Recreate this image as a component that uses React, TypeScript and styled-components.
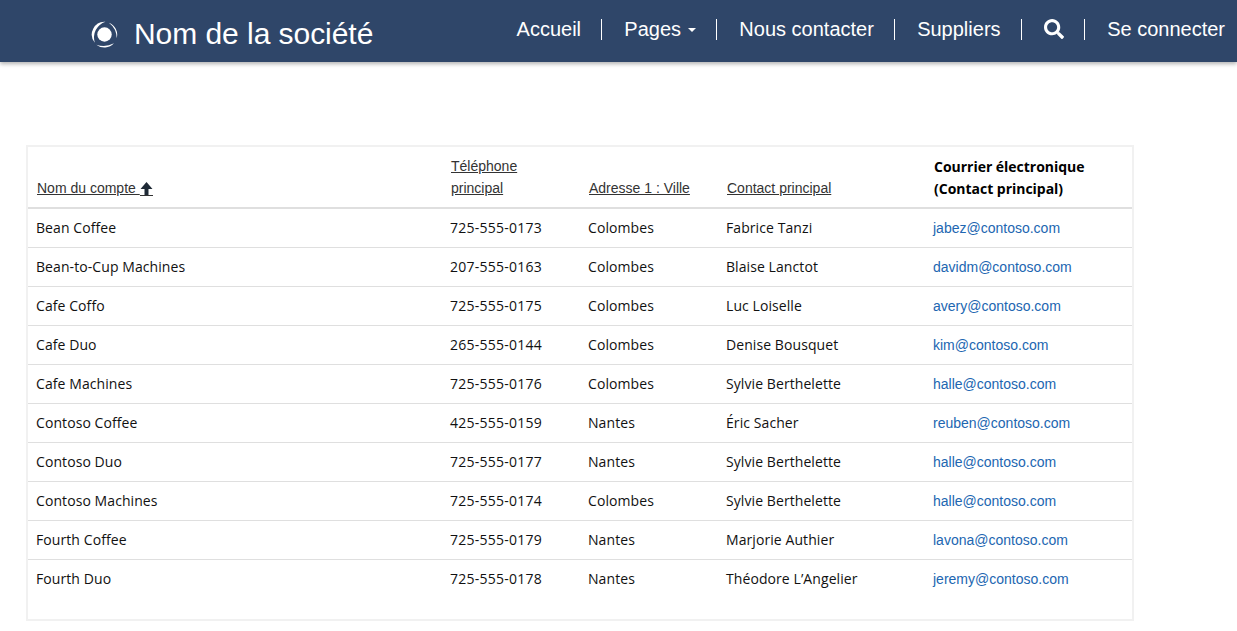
import React from 'react';
import styled, { createGlobalStyle } from 'styled-components';
import { FaSearch } from 'react-icons/fa';

const GlobalStyle = createGlobalStyle`
  html, body {
    margin: 0;
    padding: 0;
    background: #fff;
    font-family: "Open Sans", "Noto Sans", sans-serif;
    color: #000;
  }
`;

const NavBar = styled.header`
  height: 62px;
  background: #2f4669;
  box-shadow: 0 2px 4px rgba(0, 0, 0, 0.3);
  display: flex;
  align-items: flex-start;
  justify-content: space-between;
  font-family: "Liberation Sans", Arial, sans-serif;
  color: #fff;
`;

const Brand = styled.a`
  display: flex;
  align-items: center;
  gap: 16px;
  height: 68px;
  padding-left: 91px;
  font-size: 30px;
  letter-spacing: -0.05px;
  color: #fff;
`;

const NavList = styled.nav`
  display: flex;
  align-items: center;
  height: 20px;
  margin-top: 19px;
  padding-right: 12px;
`;

const NavItem = styled.a`
  display: flex;
  align-items: center;
  height: 21px;
  padding: 0 20px 0 22.3px;
  font-size: 20px;
  color: #fff;
  border-left: 1px solid #fff;
  &:first-child {
    border-left: none;
  }
  &:last-child {
    padding-right: 0;
  }
`;

const Caret = styled.span`
  width: 0;
  height: 0;
  margin-left: 7px;
  margin-top: 2px;
  border-left: 4.5px solid transparent;
  border-right: 4.5px solid transparent;
  border-top: 4px solid #fff;
`;

const Main = styled.main`
  padding: 83px 0 0 26px;
`;

const Card = styled.div`
  width: 1104px;
  height: 472px;
  border: 2px solid #f1f1f1;
`;

const Table = styled.table`
  width: 1104px;
  table-layout: fixed;
  border-collapse: collapse;
`;

const HeadCell = styled.th<{ $width: number }>`
  width: ${props => props.$width}px;
  height: 60px;
  box-sizing: border-box;
  padding: 8px;
  text-align: left;
  vertical-align: bottom;
  font-size: 14px;
  line-height: 22px;
  font-weight: 700;
  border-bottom: 2px solid #dfdfdf;
`;

const HeadTitle = styled.span`
  position: relative;
  top: 1px;
  margin-left: 1px;
  display: block;
  letter-spacing: -0.02px;
`;

const HeadLink = styled.a`
  display: inline-block;
  margin-left: 1px;
  font-family: "Liberation Sans", Arial, sans-serif;
  font-weight: 400;
  font-size: 14px;
  color: #333;
  text-decoration: underline;
`;

const SortIcon = styled.svg`
  width: 13px;
  height: 14px;
  vertical-align: -3px;
`;

const Row = styled.tr`
  height: 39px;
  border-bottom: 1px solid #dfdfdf;
  &:last-child {
    border-bottom: none;
  }
`;

const Cell = styled.td<{ $spacing?: number }>`
  box-sizing: border-box;
  padding: 0 8px 1px;
  font-size: 14px;
  letter-spacing: ${props => props.$spacing ?? 0.08}px;
  white-space: nowrap;
  color: #111;
`;

const EmailLink = styled.a`
  font-family: "Liberation Sans", Arial, sans-serif;
  font-size: 14px;
  letter-spacing: 0;
  color: #2166b1;
`;

const accounts = [
  ['Bean Coffee', '725-555-0173', 'Colombes', 'Fabrice Tanzi', 'jabez@contoso.com'],
  ['Bean-to-Cup Machines', '207-555-0163', 'Colombes', 'Blaise Lanctot', 'davidm@contoso.com'],
  ['Cafe Coffo', '725-555-0175', 'Colombes', 'Luc Loiselle', 'avery@contoso.com'],
  ['Cafe Duo', '265-555-0144', 'Colombes', 'Denise Bousquet', 'kim@contoso.com'],
  ['Cafe Machines', '725-555-0176', 'Colombes', 'Sylvie Berthelette', 'halle@contoso.com'],
  ['Contoso Coffee', '425-555-0159', 'Nantes', 'Éric Sacher', 'reuben@contoso.com'],
  ['Contoso Duo', '725-555-0177', 'Nantes', 'Sylvie Berthelette', 'halle@contoso.com'],
  ['Contoso Machines', '725-555-0174', 'Colombes', 'Sylvie Berthelette', 'halle@contoso.com'],
  ['Fourth Coffee', '725-555-0179', 'Nantes', 'Marjorie Authier', 'lavona@contoso.com'],
  ['Fourth Duo', '725-555-0178', 'Nantes', 'Théodore L’Angelier', 'jeremy@contoso.com'],
];

const Logo = () => (
  <svg width="27" height="27" viewBox="0 0 28 28" fill="#fff">
    <circle cx="14" cy="14" r="7.500" />
    <path d="M15 .8A13.200 13.200 0 0 0 4 22.500A17 17 0 0 1 15 .8z" />
    <path d="M18.500 1.800A13.200 13.200 0 0 1 26.600 18A20 20 0 0 0 18.500 1.800z" />
    <path d="M5.500 24.500A13.400 13.400 0 0 0 23.800 23.200A24 24 0 0 1 5.500 24.500z" />
  </svg>
);

export default function App() {
  return (
    <>
      <GlobalStyle />
      <NavBar>
        <Brand>
          <Logo />
          Nom de la société
        </Brand>
        <NavList>
          <NavItem>Accueil</NavItem>
          <NavItem>
            Pages
            <Caret />
          </NavItem>
          <NavItem>Nous contacter</NavItem>
          <NavItem>Suppliers</NavItem>
          <NavItem>
            <FaSearch size={20} />
          </NavItem>
          <NavItem>Se connecter</NavItem>
        </NavList>
      </NavBar>
      <Main>
        <Card>
          <Table>
            <thead>
              <tr>
                <HeadCell $width={414}>
                  <HeadLink>
                    {'Nom du compte\u00a0'}
                    <SortIcon viewBox="0 0 13 14">
                      <path d="M6.500 0L12.500 7H8.500v6h-4V7H.500z" fill="#1f2a36" />
                      <rect y="13" width="13" height="1" fill="#333" />
                    </SortIcon>
                  </HeadLink>
                </HeadCell>
                <HeadCell $width={138}>
                  <HeadLink>Téléphone principal</HeadLink>
                </HeadCell>
                <HeadCell $width={138}>
                  <HeadLink>Adresse 1 : Ville</HeadLink>
                </HeadCell>
                <HeadCell $width={207}>
                  <HeadLink>Contact principal</HeadLink>
                </HeadCell>
                <HeadCell $width={207}>
                  <HeadTitle>Courrier électronique (Contact principal)</HeadTitle>
                </HeadCell>
              </tr>
            </thead>
            <tbody>
              {accounts.map(account => (
                <Row key={account[0]}>
                  <Cell>{account[0]}</Cell>
                  <Cell $spacing={0.25}>{account[1]}</Cell>
                  <Cell>{account[2]}</Cell>
                  <Cell>{account[3]}</Cell>
                  <Cell>
                    <EmailLink>{account[4]}</EmailLink>
                  </Cell>
                </Row>
              ))}
            </tbody>
          </Table>
        </Card>
      </Main>
    </>
  );
}
